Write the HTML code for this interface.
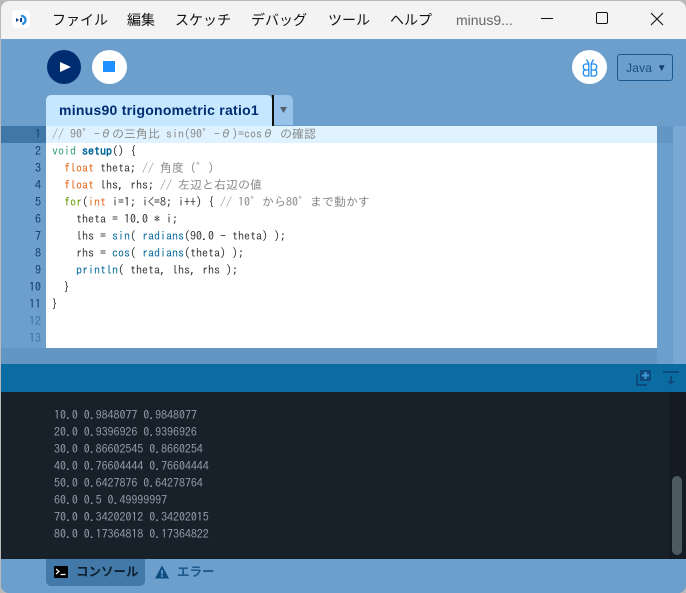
<!DOCTYPE html>
<html><head><meta charset="utf-8">
<style>
html,body{margin:0;padding:0;width:686px;height:593px;overflow:hidden;background:#b9b9b9}
*{box-sizing:border-box}
#w{position:absolute;left:1px;top:1px;width:685px;height:592px;background:#6c9fcb;border-radius:8px;overflow:hidden}
.a{position:absolute}
#page{position:absolute;left:-1px;top:-1px;width:686px;height:593px}
.m{position:absolute;top:10px;font:14px/20px "Liberation Sans","Noto Sans CJK JP",sans-serif;color:#111;white-space:pre}
.l{position:absolute;left:52px;height:17px;font:12px/17px "IPAGothic",monospace;white-space:pre;color:#333}
.c{color:#888}
.n{position:absolute;left:0;width:41px;text-align:right;font:12px/17px "IPAGothic",monospace;color:#103a6b}
.o{position:absolute;left:54px;font:12px/17px "IPAGothic",monospace;letter-spacing:-.05px;color:#929da9;white-space:pre}
.k1{color:#e2661a}.k2{color:#33997e}.k3{color:#006699;font-weight:bold}.k4{color:#669900}.k5{color:#006699}
</style></head><body>
<div id="w"><div id="page">
<!-- title bar -->
<div class="a" style="left:0;top:0;width:686px;height:39px;background:#f3f3f3"></div>
<div class="a" style="left:12px;top:10px;width:18px;height:18px;background:#fff;border-radius:4px"></div>
<svg class="a" style="left:12px;top:10px" width="18" height="18" viewBox="0 0 18 18"><path d="M9 6a4 4 0 1 1 1 8" fill="none" stroke="#2a8fe0" stroke-width="2.4"/><path d="M4 8l3 2-3 2z" fill="#0a3f8a"/><rect x="8" y="8" width="2" height="4" fill="#0a3f8a"/></svg>
<span class="m" style="left:52px">ファイル</span>
<span class="m" style="left:127px">編集</span>
<span class="m" style="left:175px">スケッチ</span>
<span class="m" style="left:251px">デバッグ</span>
<span class="m" style="left:328px">ツール</span>
<span class="m" style="left:390px">ヘルプ</span>
<span class="m" style="left:456px;color:#666">minus9...</span>
<div class="a" style="left:541px;top:18px;width:12px;height:1px;background:#111"></div>
<div class="a" style="left:596px;top:12px;width:12px;height:12px;border:1.3px solid #111;border-radius:2px"></div>
<svg class="a" style="left:650px;top:12px" width="14" height="14"><path d="M1 1l12 12M13 1L1 13" stroke="#111" stroke-width="1.1"/></svg>

<!-- toolbar -->
<div class="a" style="left:47px;top:50px;width:34px;height:34px;border-radius:50%;background:#002d72"></div>
<svg class="a" style="left:47px;top:50px" width="34" height="34"><path d="M13 12l11 5-11 5z" fill="#fff"/></svg>
<div class="a" style="left:92px;top:50px;width:35px;height:34px;border-radius:50%;background:#fff"></div>
<div class="a" style="left:103px;top:61px;width:12px;height:11px;background:#1e90ff"></div>
<div class="a" style="left:572px;top:50px;width:35px;height:34px;border-radius:50%;background:#fff"></div>
<svg class="a" style="left:572px;top:50px" width="35" height="34" fill="none" stroke="#1e8cf0" stroke-width="1.3"><path d="M14.500 9.500l2.300 4M21.500 9.500l-2.300 4"/><path d="M16.800 14v12h-3a2.500 2.500 0 0 1-2.500-2.500v-1a2.500 2.500 0 0 1 2-2.500a3 3 0 0 1-2-2.500v-1a2.500 2.500 0 0 1 2.500-2.500zM13.300 20h3.500"/><path d="M19.200 14v12h3a2.500 2.500 0 0 0 2.500-2.500v-1a2.500 2.500 0 0 0-2-2.500a3 3 0 0 0 2-2.500v-1a2.500 2.500 0 0 0-2.500-2.500zM22.700 20h-3.500"/></svg>
<div class="a" style="left:617px;top:54px;width:56px;height:27px;border:1px solid #1d5a8f;border-radius:3px;font:12px/26px 'Liberation Sans',sans-serif;letter-spacing:.2px;color:#1d4f80;padding-left:8px;white-space:pre">Java <span style="font-size:10px;position:relative;left:1px;top:-1px;color:#123f6e">▼</span></div>

<!-- tabs -->
<div class="a" style="left:46px;top:95px;width:226px;height:31px;background:#c5e7ff;border-radius:5px 5px 0 0;font:bold 14px/30px 'Liberation Sans',sans-serif;letter-spacing:.25px;color:#002d72;padding-left:13px;white-space:pre">minus90 trigonometric ratio1</div>
<div class="a" style="left:272px;top:95px;width:2px;height:31px;background:#111"></div>
<div class="a" style="left:274px;top:95px;width:19px;height:30px;background:#97c2ea;border-radius:0 5px 0 0"></div>
<svg class="a" style="left:280px;top:106px" width="8" height="8"><path d="M0 1h7L3.500 7z" fill="#555f6b"/></svg>

<!-- gutter / editor -->
<div class="a" style="left:0;top:126px;width:46px;height:17px;background:#3f78a8"></div>
<div class="a" style="left:46px;top:126px;width:611px;height:222px;background:#fff"></div>
<div class="a" style="left:46px;top:126px;width:611px;height:17px;background:#def3ff"></div>
<div class="a" style="left:657px;top:126px;width:16px;height:17px;background:#6496c3"></div>
<div class="a" style="left:673px;top:126px;width:13px;height:238px;background:#78a8d3"></div>
<div class="a" style="left:0;top:348px;width:657px;height:16px;background:#6496c3"></div>

<div class="n" style="top:126px">1</div>
<div class="n" style="top:143px">2</div>
<div class="n" style="top:160px">3</div>
<div class="n" style="top:177px">4</div>
<div class="n" style="top:194px">5</div>
<div class="n" style="top:211px">6</div>
<div class="n" style="top:228px">7</div>
<div class="n" style="top:245px">8</div>
<div class="n" style="top:262px">9</div>
<div class="n" style="top:279px">10</div>
<div class="n" style="top:296px">11</div>
<div class="n" style="top:313px;color:#3d72a6">12</div>
<div class="n" style="top:330px;color:#3d72a6">13</div>

<div class="l c" style="top:126px">// 90°-θの三角比 sin(90°-θ)=cosθ の確認</div>
<div class="l" style="top:143px"><span class="k2">void</span> <span class="k3">setup</span>() {</div>
<div class="l" style="top:160px">  <span class="k1">float</span> theta; <span class="c">// 角度（°）</span></div>
<div class="l" style="top:177px">  <span class="k1">float</span> lhs, rhs; <span class="c">// 左辺と右辺の値</span></div>
<div class="l" style="top:194px">  <span class="k4">for</span>(<span class="k1">int</span> i=1; i&lt;=8; i++) { <span class="c">// 10°から80°まで動かす</span></div>
<div class="l" style="top:211px">    theta = 10.0 * i;</div>
<div class="l" style="top:228px">    lhs = <span class="k5">sin</span>( <span class="k5">radians</span>(90.0 - theta) );</div>
<div class="l" style="top:245px">    rhs = <span class="k5">cos</span>( <span class="k5">radians</span>(theta) );</div>
<div class="l" style="top:262px">    <span class="k5">println</span>( theta, lhs, rhs );</div>
<div class="l" style="top:279px">  }</div>
<div class="l" style="top:296px">}</div>

<!-- console header -->
<div class="a" style="left:0;top:364px;width:686px;height:28px;background:#0a6ca1"></div>
<svg class="a" style="left:636px;top:369px" width="17" height="17"><path d="M0 5h2v10h9v2H0z" fill="#0f4a7e"/><path d="M4 1h11v11H4z" fill="#0f4a7e"/><path d="M8.500 3h2v2.500H13v2h-2.500V10h-2V7.500H6v-2h2.500z" fill="#3c9ad6"/></svg>
<svg class="a" style="left:663px;top:371px" width="16" height="16"><rect x="0" y="0" width="16" height="2" fill="#0f4a7e"/><path d="M7 5h2v5h2.500L8 14 4.500 10H7z" fill="#0f4a7e"/></svg>

<!-- console -->
<div class="a" style="left:0;top:392px;width:686px;height:167px;background:#18202a"></div>
<div class="a" style="left:669px;top:392px;width:17px;height:167px;background:#141b24"></div>
<div class="a" style="left:672px;top:476px;width:10px;height:79px;border-radius:5px;background:#4d5a60"></div>
<div class="o" style="top:407px">10.0 0.9848077 0.9848077</div>
<div class="o" style="top:424px">20.0 0.9396926 0.9396926</div>
<div class="o" style="top:441px">30.0 0.86602545 0.8660254</div>
<div class="o" style="top:458px">40.0 0.76604444 0.76604444</div>
<div class="o" style="top:475px">50.0 0.6427876 0.64278764</div>
<div class="o" style="top:492px">60.0 0.5 0.49999997</div>
<div class="o" style="top:509px">70.0 0.34202012 0.34202015</div>
<div class="o" style="top:526px">80.0 0.17364818 0.17364822</div>

<!-- bottom tabs -->
<div class="a" style="left:0;top:559px;width:686px;height:34px;background:#6c9fcb"></div>
<div class="a" style="left:46px;top:559px;width:99px;height:27px;background:#4279a8;border-radius:0 0 5px 5px"></div>
<div class="a" style="left:54px;top:566px;width:14px;height:12px;background:#000;border-radius:1px"></div>
<svg class="a" style="left:54px;top:566px" width="14" height="12"><path d="M2 3l3 2.500-3 2.500" fill="none" stroke="#fff" stroke-width="1.200"/><path d="M6.500 8.500h5" stroke="#fff" stroke-width="1.200"/></svg>
<div class="a" style="left:76px;top:564px;font:bold 12.500px/17px 'Liberation Sans','Noto Sans CJK JP',sans-serif;color:#10202e;white-space:pre">コンソール</div>
<svg class="a" style="left:155px;top:565px" width="14" height="14"><path d="M7 .5L14 13.500H0z" fill="#0d4c80"/><rect x="6.200" y="5" width="1.700" height="4.500" fill="#6c9fcb"/><rect x="6.200" y="10.300" width="1.700" height="1.700" fill="#6c9fcb"/></svg>
<div class="a" style="left:177px;top:564px;font:bold 12.500px/17px 'Liberation Sans','Noto Sans CJK JP',sans-serif;color:#1d5a8f;white-space:pre">エラー</div>
</div></div>
</body></html>
